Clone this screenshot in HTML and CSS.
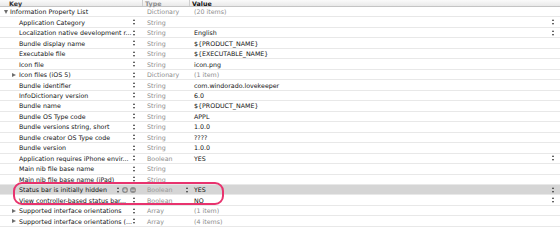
FILE: index.html
```html
<!DOCTYPE html>
<html lang="en">
<head>
<meta charset="UTF-8">
<title>Info.plist</title>
<link rel="stylesheet" href="styles.css">
</head>
<body>
<div class="plist">
    <div class="head">
        <div class="key">Key</div>
        <div class="type">Type</div>
        <div class="val">Value</div>
    </div>

    <div class="row">
        <div class="key root"><span class="tri down"></span>Information Property List</div>
        <div class="type">Dictionary</div>
        <div class="val dim">(20 items)</div>
    </div>
    <div class="row">
        <div class="key"><span class="name">Application Category</span><span class="step"></span></div>
        <div class="type">String</div>
        <div class="val"><span></span><span class="step"></span></div>
    </div>
    <div class="row">
        <div class="key"><span class="name">Localization native development r...</span><span class="step"></span></div>
        <div class="type">String</div>
        <div class="val"><span>English</span><span class="step"></span></div>
    </div>
    <div class="row">
        <div class="key"><span class="name">Bundle display name</span><span class="step"></span></div>
        <div class="type">String</div>
        <div class="val">${PRODUCT_NAME}</div>
    </div>
    <div class="row">
        <div class="key"><span class="name">Executable file</span><span class="step"></span></div>
        <div class="type">String</div>
        <div class="val">${EXECUTABLE_NAME}</div>
    </div>
    <div class="row">
        <div class="key"><span class="name">Icon file</span><span class="step"></span></div>
        <div class="type">String</div>
        <div class="val">icon.png</div>
    </div>
    <div class="row">
        <div class="key"><span class="tri"></span><span class="name">Icon files (iOS 5)</span><span class="step"></span></div>
        <div class="type">Dictionary</div>
        <div class="val dim">(1 item)</div>
    </div>
    <div class="row">
        <div class="key"><span class="name">Bundle identifier</span><span class="step"></span></div>
        <div class="type">String</div>
        <div class="val">com.windorado.lovekeeper</div>
    </div>
    <div class="row">
        <div class="key"><span class="name">InfoDictionary version</span><span class="step"></span></div>
        <div class="type">String</div>
        <div class="val">6.0</div>
    </div>
    <div class="row">
        <div class="key"><span class="name">Bundle name</span><span class="step"></span></div>
        <div class="type">String</div>
        <div class="val">${PRODUCT_NAME}</div>
    </div>
    <div class="row">
        <div class="key"><span class="name">Bundle OS Type code</span><span class="step"></span></div>
        <div class="type">String</div>
        <div class="val">APPL</div>
    </div>
    <div class="row">
        <div class="key"><span class="name">Bundle versions string, short</span><span class="step"></span></div>
        <div class="type">String</div>
        <div class="val">1.0.0</div>
    </div>
    <div class="row">
        <div class="key"><span class="name">Bundle creator OS Type code</span><span class="step"></span></div>
        <div class="type">String</div>
        <div class="val">????</div>
    </div>
    <div class="row">
        <div class="key"><span class="name">Bundle version</span><span class="step"></span></div>
        <div class="type">String</div>
        <div class="val">1.0.0</div>
    </div>
    <div class="row">
        <div class="key"><span class="name">Application requires iPhone envir...</span><span class="step"></span></div>
        <div class="type">Boolean</div>
        <div class="val"><span>YES</span><span class="step"></span></div>
    </div>
    <div class="row">
        <div class="key"><span class="name">Main nib file base name</span><span class="step"></span></div>
        <div class="type">String</div>
        <div class="val"></div>
    </div>
    <div class="row">
        <div class="key"><span class="name">Main nib file base name (iPad)</span><span class="step"></span></div>
        <div class="type">String</div>
        <div class="val"></div>
    </div>
    <div class="row sel">
        <div class="key"><span class="name">Status bar is initially hidden</span><span class="step"></span><span class="btn">+</span><span class="btn">&minus;</span></div>
        <div class="type"><span>Boolean</span><span class="step"></span></div>
        <div class="val"><span>YES</span><span class="step"></span></div>
    </div>
    <div class="row">
        <div class="key"><span class="name">View controller-based status bar...</span><span class="step"></span></div>
        <div class="type">Boolean</div>
        <div class="val"><span>NO</span><span class="step"></span></div>
    </div>
    <div class="row">
        <div class="key"><span class="tri"></span><span class="name">Supported interface orientations</span><span class="step"></span></div>
        <div class="type">Array</div>
        <div class="val dim">(1 item)</div>
    </div>
    <div class="row">
        <div class="key"><span class="tri"></span><span class="name">Supported interface orientations (...</span><span class="step"></span></div>
        <div class="type">Array</div>
        <div class="val dim">(4 items)</div>
    </div>

    <div class="mark"></div>
</div>
</body>
</html>
```

FILE: styles.css
```css
body {
    margin: 0;
    background: #fff;
    font-family: "DejaVu Sans", sans-serif;
    font-size: 6.3px;
    color: #111;
}
.plist {
    position: relative;
    width: 560px;
    height: 242px;
    overflow: hidden;
}
.head, .row {
    display: grid;
    grid-template-columns: 143px 47px 1fr;
    box-sizing: border-box;
}
.head {
    height: 7px;
    line-height: 5px;
    background: linear-gradient(#fafafa, #e9e9e9);
    border-bottom: 1px solid #c4c4c4;
    font-weight: bold;
    color: #333;
}
.head .key {
    padding-left: 9px;
    border-right: 1px solid #cfcfcf;
}
.head .type {
    padding-left: 2px;
    border-right: 1px solid #cfcfcf;
}
.head .val {
    padding-left: 2px;
}
.row {
    height: 10.47px;
    border-bottom: 1px solid #e8e8e8;
    align-items: center;
}
.row.sel {
    background: #d5d5d5;
}
.key {
    display: flex;
    align-items: center;
    padding-left: 19px;
    padding-right: 7px;
    min-width: 0;
}
.key.root {
    padding-left: 4px;
}
.name {
    flex: 1;
    min-width: 0;
    white-space: nowrap;
}
.type {
    display: flex;
    align-items: center;
    justify-content: space-between;
    padding-left: 4px;
    padding-right: 1px;
    color: #8c8c8c;
}
.sel .type {
    color: #9a9a9a;
}
.val {
    display: flex;
    align-items: center;
    justify-content: space-between;
    padding-left: 4px;
    padding-right: 5px;
    color: #111;
}
.val.dim {
    color: #8c8c8c;
}
.tri {
    width: 0;
    height: 0;
    margin-left: -7px;
    margin-right: 3px;
    border-top: 2px solid transparent;
    border-bottom: 2px solid transparent;
    border-left: 4px solid #6e6e6e;
}
.tri.down {
    margin-left: 0;
    margin-right: 2px;
    border-left: 2px solid transparent;
    border-right: 2px solid transparent;
    border-top: 4px solid #6e6e6e;
    border-bottom: 0;
}
.step {
    position: relative;
    width: 3px;
    height: 7px;
    flex: none;
    margin-left: 3px;
}
.step::before, .step::after {
    content: "";
    position: absolute;
    left: 0;
    border-left: 1.5px solid transparent;
    border-right: 1.5px solid transparent;
}
.step::before {
    top: 0.5px;
    border-bottom: 2.5px solid #333;
}
.step::after {
    bottom: 0.5px;
    border-top: 2.5px solid #333;
}
.btn {
    width: 6px;
    height: 6px;
    margin-left: 2px;
    border-radius: 50%;
    background: #8d8d8d;
    color: #e8e8e8;
    font-size: 6px;
    font-weight: bold;
    line-height: 6px;
    text-align: center;
    flex: none;
}
.mark {
    position: absolute;
    left: 13px;
    top: 182px;
    width: 211px;
    height: 23px;
    box-sizing: border-box;
    border: 2px solid #e8336e;
    border-radius: 9px;
}
```
